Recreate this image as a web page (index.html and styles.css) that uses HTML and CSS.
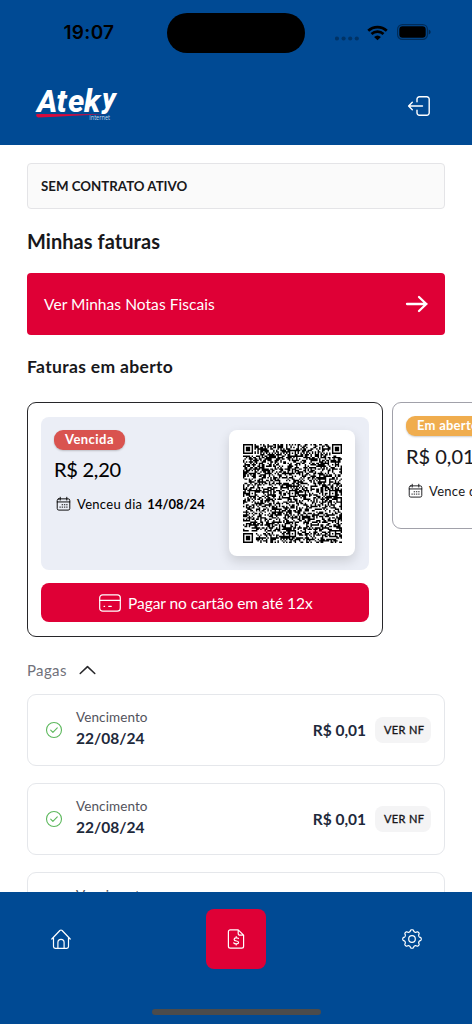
FILE: index.html
```html
<!DOCTYPE html>
<html lang="pt-BR">
<head>
<meta charset="utf-8">
<title>Minhas faturas</title>
<link rel="stylesheet" href="styles.css">
</head>
<body>
<svg class="sprite" aria-hidden="true">
  <symbol id="calendar" viewBox="0 0 16 16">
    <path d="M3 2.500h10a1.700 1.700 0 0 1 1.700 1.700v8.600a1.700 1.700 0 0 1-1.700 1.700H3a1.700 1.700 0 0 1-1.700-1.700V4.200A1.700 1.700 0 0 1 3 2.500zM1.300 5.800h13.400M4.500.8v3M11.500.8v3"/>
    <path class="days" d="M6.500 8.800h.6M8.900 8.800h.6M11.300 8.800h.6M4.100 11.300h.6M6.500 11.300h.6M8.900 11.300h.6M11.300 11.300h.6"/>
  </symbol>
  <symbol id="check" viewBox="0 0 18 18">
    <circle cx="9" cy="9" r="7.500"/><path d="M5.700 9.200l2.200 2.200 4.400-4.500"/>
  </symbol>
</svg>
<div class="app">
  <header class="header">
    <div class="status">
      <span class="time">19:07</span>
      <span class="island"></span>
      <span class="signals">
        <svg class="dots" viewBox="0 0 24 5"><circle cx="2" cy="2.500" r="2.100"/><circle cx="8.600" cy="2.500" r="2.100"/><circle cx="15.200" cy="2.500" r="2.100"/><circle cx="21.800" cy="2.500" r="2.100"/></svg>
        <svg class="wifi" viewBox="0 0 22 16"><path d="M1.300 5.700a14 14 0 0 1 19.400 0M4.700 9.100a9.200 9.200 0 0 1 12.600 0"/><path class="fill" d="M7.400 12.100a5.400 5.400 0 0 1 7.200 0L11 15.700z"/></svg>
        <svg class="battery" viewBox="0 0 34 16"><rect class="shell" x=".6" y=".6" width="29.800" height="14.800" rx="4.700"/><rect x="2.300" y="2.300" width="26.400" height="11.400" rx="3.200"/><path class="cap" d="M31.700 5.400q2 .8 2 2.600t-2 2.600z"/></svg>
      </span>
    </div>
    <div class="brand-row">
      <svg class="logo" viewBox="0 0 84 34">
        <text class="logo-name" x="1 20.500 32 48" y="23.800">Atek<tspan class="logo-y" x="66" y="20.200">y</tspan></text>
        <path class="swoosh" d="M.8 26Q38 26 70 26.400Q38 27.400 2 29.600Q-.4 28.500.2 26.500z"/>
        <text class="logo-sub" x="53.300" y="32.300" textLength="20.800" lengthAdjust="spacingAndGlyphs">internet</text>
      </svg>
      <svg class="logout" viewBox="0 0 24 24"><path d="M10 7.700V5.200A2.400 2.400 0 0 1 12.400 2.800h7.400a2.400 2.400 0 0 1 2.400 2.400v13.600a2.400 2.400 0 0 1-2.400 2.400h-7.400a2.400 2.400 0 0 1-2.400-2.400v-2.500M15.500 12H1.700M5.300 8.300L1.600 12l3.700 3.700"/></svg>
    </div>
  </header>

  <main class="content">
    <div class="contract"><span class="t-contract">SEM CONTRATO ATIVO</span></div>
    <h1 class="title"><span>Minhas faturas</span></h1>
    <div class="notes"><span class="t-notes">Ver Minhas Notas Fiscais</span>
      <svg class="arrow" viewBox="0 0 24 18"><path d="M2 9h19.500M14 2l7.300 7-7.300 7"/></svg>
    </div>
    <h2 class="subtitle"><span>Faturas em aberto</span></h2>

    <div class="carousel">
      <section class="invoice invoice-due">
        <div class="invoice-body">
          <div class="invoice-info">
            <span class="badge badge-late">Vencida</span>
            <span class="amount">R$ 2,20</span>
            <span class="due"><svg class="cal"><use href="#calendar"/></svg><span class="t-due">Venceu dia</span><b>14/08/24</b></span>
          </div>
          <div class="qr-card"><svg class="qr" viewBox="0 0 69 69"><path id="qr-modules"/></svg></div>
        </div>
        <div class="pay">
          <svg class="card-icon" viewBox="0 0 22 18"><rect x=".7" y=".8" width="20.600" height="16.400" rx="3"/><path d="M.8 6.300h20.400M5 12.300h.6M9.700 12.300h2.600"/></svg>
          <span class="t-pay">Pagar no cartão em até 12x</span>
        </div>
      </section>
      <section class="invoice invoice-open">
        <span class="badge badge-open">Em aberto</span>
        <span class="amount amount-open">R$ 0,01</span>
        <span class="due"><svg class="cal"><use href="#calendar"/></svg><span class="t-due">Vence dia</span></span>
      </section>
    </div>

    <div class="paid-head"><span class="t-paid">Pagas</span><svg class="chevron" viewBox="0 0 18 10"><path d="M1.300 8.700L9 1.400l7.700 7.300"/></svg></div>
    <div class="paid-list">
      <div class="paid"><svg class="check"><use href="#check"/></svg><div class="paid-date"><span>Vencimento</span><b>22/08/24</b></div><b class="price">R$ 0,01</b><span class="nf"><span>VER NF</span></span></div>
      <div class="paid"><svg class="check"><use href="#check"/></svg><div class="paid-date"><span>Vencimento</span><b>22/08/24</b></div><b class="price">R$ 0,01</b><span class="nf"><span>VER NF</span></span></div>
      <div class="paid"><div class="paid-date paid-date-cut"><span>Vencimento</span></div></div>
    </div>
  </main>

  <nav class="nav">
    <div class="tabs">
      <span class="tab"><svg viewBox="0 0 20 20"><path d="M.8 10L8.900 1.500a1.500 1.500 0 0 1 2.200 0L19.200 10M2.500 8.400v9.200a1.700 1.700 0 0 0 1.700 1.700h11.600a1.700 1.700 0 0 0 1.700-1.700V8.400M6.900 19.200v-5.700a3.100 3.100 0 0 1 6.200 0v5.700"/></svg></span>
      <span class="tab tab-active"><svg viewBox="0 0 20 20"><path d="M12.200.8H4.300a1.900 1.900 0 0 0-1.900 1.900v14.600a1.900 1.900 0 0 0 1.900 1.900h11.400a1.900 1.900 0 0 0 1.900-1.900V6.200zM12.200.8v3.700a1.700 1.700 0 0 0 1.700 1.700h3.700M12.500 9.500c-.5-.8-4.400-1.200-4.400.9 0 2.300 4.500.9 4.500 3 0 1.900-4 1.900-4.900.5M10.200 7.700v1M10.200 15v1"/></svg></span>
      <span class="tab"><svg viewBox="0 0 20 20"><path id="gear"/><circle cx="10" cy="10" r="3.300"/></svg></span>
    </div>
    <span class="home-bar"></span>
  </nav>
</div>
<script src="app.js"></script>
</body>
</html>
```
FILE: styles.css
```css
* { box-sizing: border-box; }
body { margin: 0; background: #fff; color: #18181b; font-family: Lato, "Open Sans", sans-serif; }
svg { fill: none; stroke: currentColor; stroke-linecap: round; stroke-linejoin: round; display: block; flex: none; }
.sprite { position: absolute; width: 0; height: 0; }
h1, h2 { margin: 0; }
span, b { white-space: nowrap; }
.app { height: 1024px; width: 472px; display: flex; flex-direction: column; overflow: hidden; }

.header { height: 145px; flex: none; background: #004a94; }
.status { height: 66px; display: grid; grid-template-columns: 167px 138px 1fr; align-items: center; color: #000; }
.time { padding-left: 63.500px; font: 600 19px/24px Inter, sans-serif; letter-spacing: .3px; }
.island { height: 40.500px; border-radius: 21px; background: #000; }
.signals { display: flex; align-items: center; padding-left: 30px; }
.signals svg { stroke: none; fill: #000; }
.dots { width: 24px; height: 5px; opacity: .3; margin-top: 10px; }
.signals .wifi { width: 21px; height: 16px; margin-left: 8px; margin-top: -1px; stroke: #000; stroke-width: 2.800; stroke-linecap: butt; fill: none; }
.signals .wifi .fill { fill: #000; stroke: none; }
.battery { width: 34px; height: 16px; margin-left: 8.500px; margin-top: -2px; }
.battery .shell { fill: none; stroke: #000; stroke-opacity: .4; stroke-width: 1.200; }
.battery .cap { fill-opacity: .45; }
.brand-row { display: flex; justify-content: space-between; align-items: flex-start; padding: 22px 41px 0 36px; color: #fff; }
.logo { width: 84px; height: 34px; stroke: none; overflow: visible; }
.logo-name { font: italic 800 31px Roboto, sans-serif; fill: #fff; }
.logo-y { font-size: 28px; }
.logo-sub { font: 6.500px "Open Sans", sans-serif; fill: #c4d5e8; }
.swoosh { fill: #d90a3c; }
.logout { width: 24px; height: 24px; margin-top: 5.500px; stroke-width: 1.400; }

.content { flex: 1; min-height: 0; overflow: hidden; padding: 18px 0 0 27px; }
.contract { width: 418px; height: 46px; border: 1px solid #e4e4e7; border-radius: 4px; background: #fafafa; display: flex; align-items: center; padding-left: 13px; font-size: 13.300px; font-weight: 700; }
.title { height: 64px; display: flex; align-items: center; font-size: 20px; line-height: 24px; padding-bottom: 1px; letter-spacing: .05px; }
.notes { width: 418px; height: 62px; border-radius: 4px; background: #df0036; color: #fff; display: flex; align-items: center; justify-content: space-between; padding: 0 16px 0 17px; font-size: 15.500px; letter-spacing: .06px; }
.arrow { width: 24px; height: 18px; stroke-width: 2.300; }
.subtitle { height: 67px; display: flex; align-items: center; font-size: 17.500px; line-height: 24px; padding-bottom: 4px; letter-spacing: .33px; }

.carousel { display: flex; align-items: flex-start; gap: 9px; width: 445px; overflow: hidden; }
.invoice { flex: none; border: 1px solid #27272a; border-radius: 9px; padding: 14px 13px; }
.invoice-due { width: 356px; height: 235px; padding-top: 14px; display: flex; flex-direction: column; gap: 13px; color: #000; }
.invoice-body { height: 153px; border-radius: 8px; background: #ebeef6; display: flex; justify-content: space-between; padding: 13px 14px 13px 13px; }
.invoice-info, .invoice-open { display: flex; flex-direction: column; align-items: flex-start; }
.badge { height: 20px; border-radius: 9px; color: #fff; font-size: 13px; font-weight: 700; line-height: 19px; letter-spacing: .45px; padding: 0 11px; box-shadow: 0 1px 2px #0003; }
.badge-late { width: 71px; background: #d9534f; }
.badge-open { width: 90px; background: #f0ad4e; letter-spacing: .25px; }
.amount { font-size: 20px; line-height: 24px; margin-top: 7px; letter-spacing: -.25px; -webkit-text-stroke: .1px; }
.amount-open { letter-spacing: 0; margin-top: 8px; }
.due { display: flex; align-items: center; height: 20px; margin-top: 13px; padding-left: 2px; font-size: 13px; }
.t-due { letter-spacing: .3px; }
.due b { margin-left: 5px; }
.cal { width: 15px; height: 16px; margin-right: 6px; stroke-width: 1; }
.qr-card { width: 126px; height: 126px; border-radius: 8px; background: #fff; padding: 13.500px; box-shadow: 0 5px 12px #00000024; }
.qr { width: 99px; height: 99px; fill: #000; stroke: none; }
.pay { height: 39px; border-radius: 8px; background: #df0036; color: #fff; display: flex; align-items: center; padding-left: 58px; gap: 7px; font-size: 15.500px; letter-spacing: -.05px; }
.card-icon { width: 22px; height: 18px; stroke-width: 1.200; }
.invoice-open { width: 250px; height: 127px; border-color: #a1a1aa; padding-top: 13px; }

.paid-head { display: flex; align-items: center; height: 57px; padding-top: 8px; gap: 12px; font-size: 15px; letter-spacing: .35px; color: #71717a; }
.chevron { width: 17px; height: 10px; stroke-width: 1.600; color: #27272a; }
.paid-list { display: flex; flex-direction: column; gap: 17px; width: 418px; }
.paid { height: 72px; flex: none; border: 1px solid #e5e7eb; border-radius: 9px; display: flex; align-items: center; padding: 0 13px 0 17px; color: #1e293b; }
.check { width: 18px; height: 18px; color: #5cb85c; stroke-width: 1.100; }
.paid-date { display: flex; flex-direction: column; margin-left: 13px; flex: 1; line-height: 21px; font-size: 15.500px; padding-bottom: 4px; }
.paid-date-cut { margin-left: 31px; padding-bottom: 25px; }
.paid-date span { font-size: 13.500px; letter-spacing: .1px; color: #52525b; }
.price { font-size: 15.500px; margin-right: 9px; }
.nf { width: 56px; height: 26px; border-radius: 8px; background: #f4f4f5; color: #18181b; font-size: 11px; letter-spacing: .35px; line-height: 26px; padding-left: 9px; -webkit-text-stroke: .35px; }

.nav { height: 132px; flex: none; background: #004a94; display: flex; flex-direction: column; align-items: center; justify-content: space-between; padding: 17px 0 9px; }
.tabs { width: 411px; display: flex; justify-content: space-between; color: #fff; }
.tab { width: 60px; height: 60px; border-radius: 8px; display: flex; align-items: center; justify-content: center; }
.tab svg { width: 20px; height: 20px; stroke-width: 1.200; }
.tab-active { background: #df0036; }
.home-bar { width: 169px; height: 6px; border-radius: 3px; background: #4b4b4b; }
```
FILE: app.js
```javascript
// QR symbol, version 13: 69 modules a side.
const N = 69;
const ring = (dx, dy, r) => Math.max(Math.abs(dx), Math.abs(dy)) <= r;
let seed = 1307;
const rand = () => (seed = (seed * 1664525 + 1013904223) >>> 0) / 4294967296;

function moduleAt(x, y) {
  const noise = rand() < 0.52;
  for (const [cx, cy] of [[3, 3], [65, 3], [3, 65]]) {
    if (ring(x - cx, y - cy, 4)) {
      const d = Math.max(Math.abs(x - cx), Math.abs(y - cy));
      return d === 3 || d < 2;
    }
  }
  for (const cx of [6, 34, 62]) {
    for (const cy of [6, 34, 62]) {
      const corner = (cx === 6 && cy !== 34) || (cx === 62 && cy === 6);
      if (!corner && ring(x - cx, y - cy, 2)) {
        return Math.max(Math.abs(x - cx), Math.abs(y - cy)) !== 1;
      }
    }
  }
  if (x === 6 || y === 6) return (x + y) % 2 === 0;
  return noise;
}

let d = '';
for (let y = 0; y < N; y++) {
  for (let x = 0; x < N; x++) {
    if (moduleAt(x, y)) d += `M${x} ${y}h1v1h-1z`;
  }
}
document.getElementById('qr-modules').setAttribute('d', d);

// Eight-lobed gear outline.
let gear = '';
for (let i = 0; i <= 160; i++) {
  const a = (i / 160) * Math.PI * 2;
  const r = 8.35 + 0.95 * Math.tanh(1.8 * Math.cos(8 * a));
  gear += `${i ? 'L' : 'M'}${(10 + r * Math.cos(a)).toFixed(2)} ${(10 + r * Math.sin(a)).toFixed(2)}`;
}
document.getElementById('gear').setAttribute('d', gear + 'Z');
```
